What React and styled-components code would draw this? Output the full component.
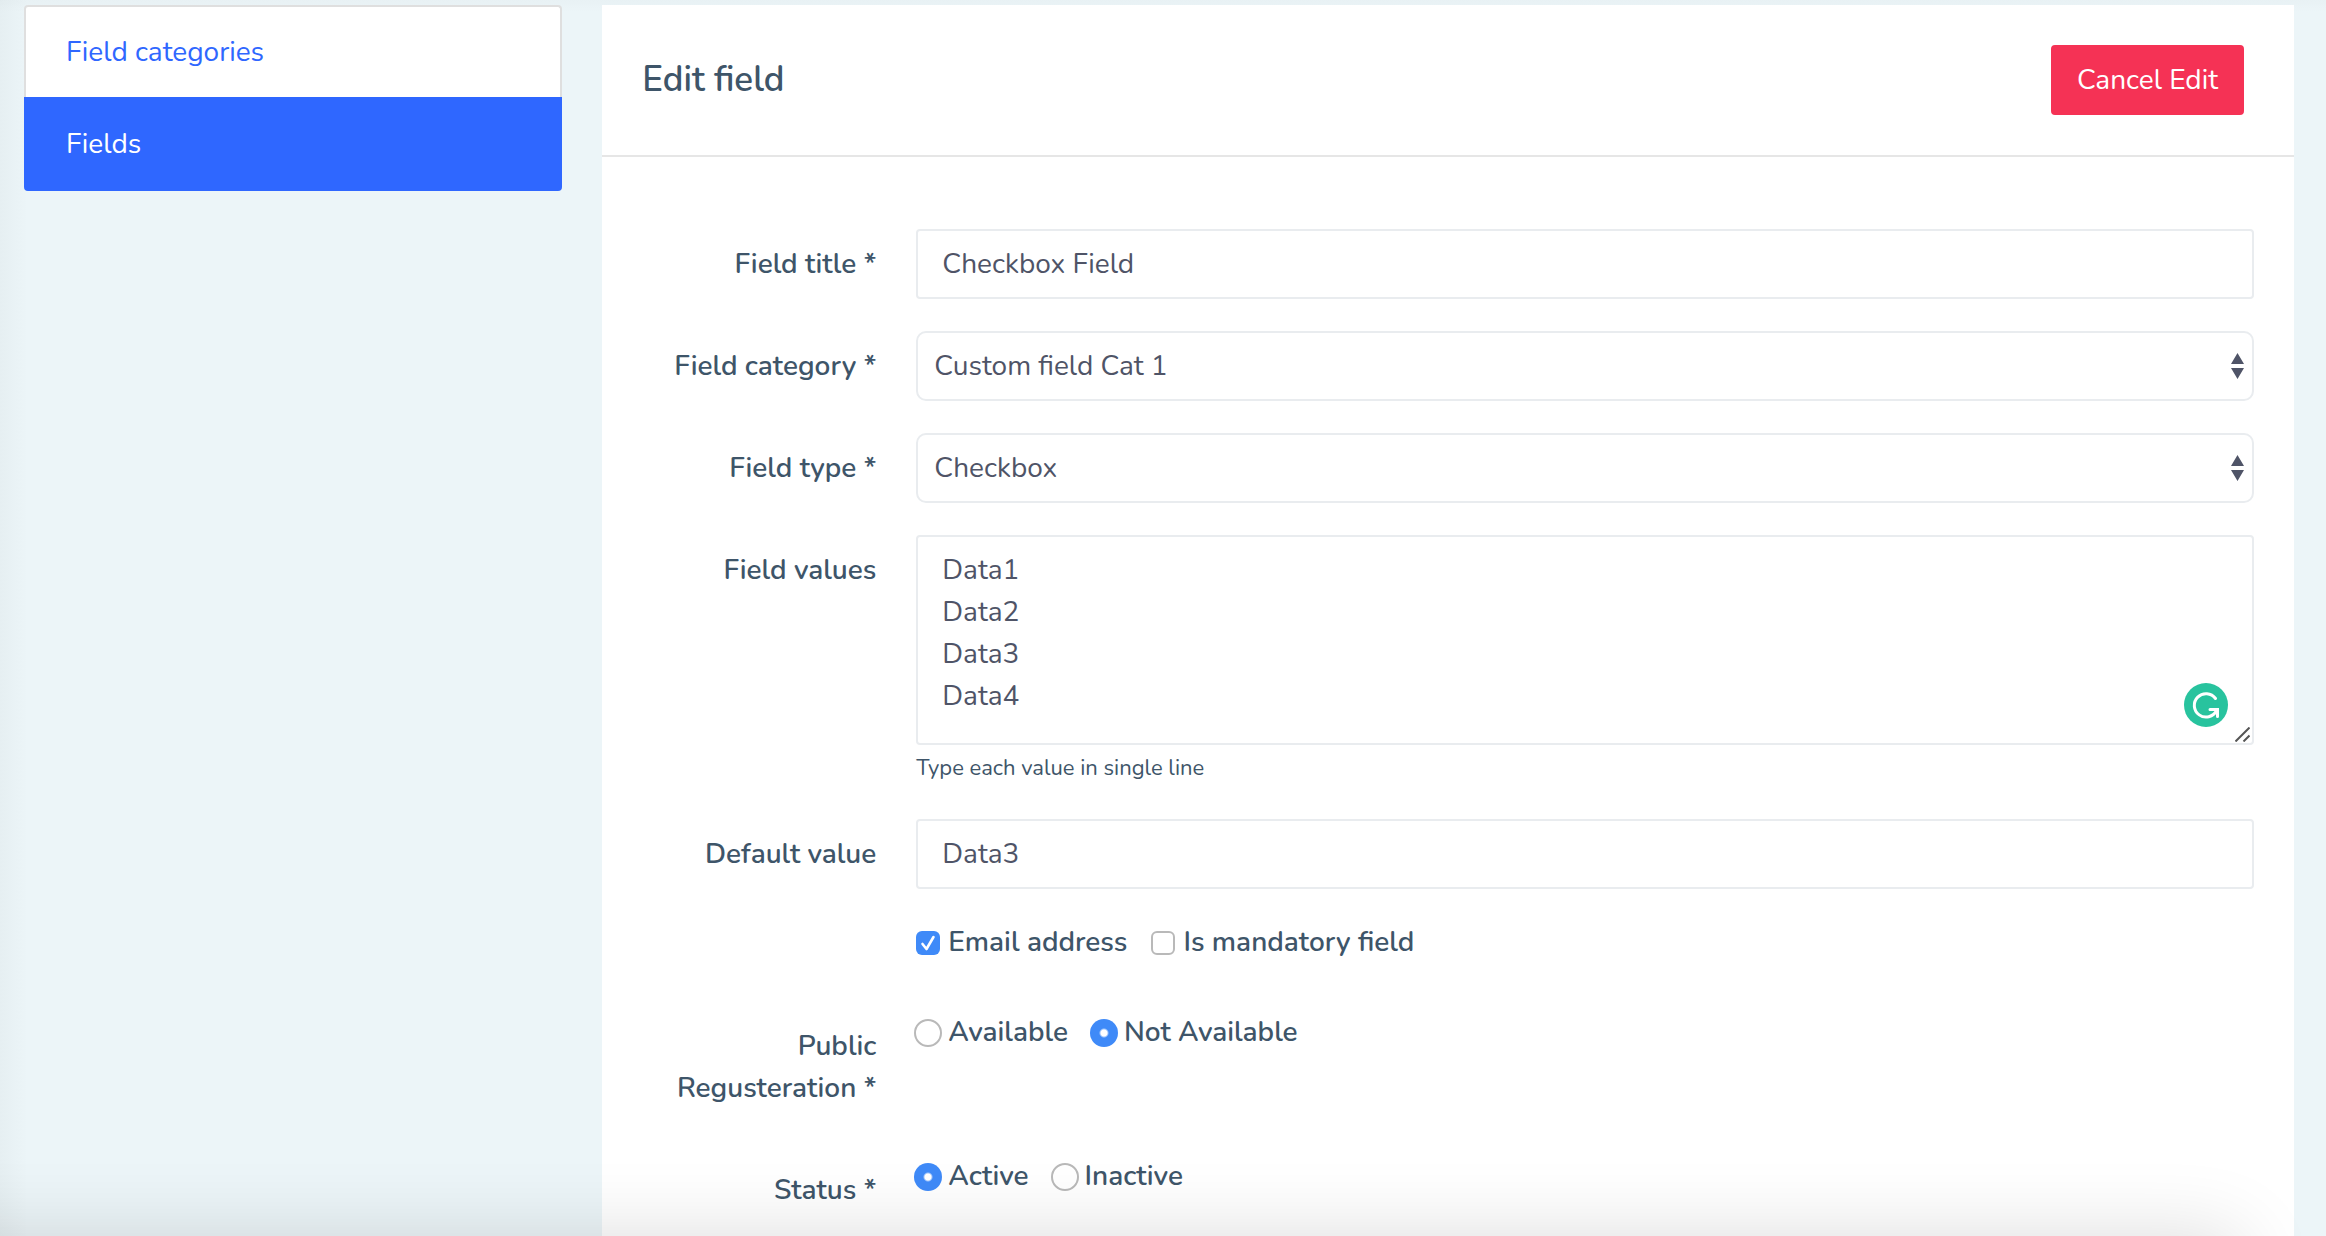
import styled, { createGlobalStyle } from 'styled-components';

const GlobalStyle = createGlobalStyle`
  * {
    box-sizing: border-box;
  }
  body {
    margin: 0;
    font-family: 'Nunito', 'Lato', sans-serif;
    font-size: 28px;
    line-height: 42px;
    color: #3e5569;
    background-color: #ecf5f8;
  }
`;

const Page = styled.div`
  position: relative;
  display: grid;
  grid-template-columns: minmax(0, 7fr) minmax(0, 22fr);
  gap: 40px;
  min-height: 100vh;
  padding: 5px 32px 0 24px;
  overflow: hidden;
  background-image:
    linear-gradient(to bottom, rgba(40, 50, 50, 0.02), transparent 12px),
    linear-gradient(to right, rgba(40, 50, 50, 0.03), transparent 28px);
`;

const BottomShade = styled.div`
  position: absolute;
  left: -100px;
  right: 86px;
  bottom: -100px;
  height: 100px;
  pointer-events: none;
  box-shadow: 0 0 80px rgba(0, 0, 0, 0.14);
`;

const Menu = styled.nav`
  align-self: start;
  display: flex;
  flex-direction: column;
`;

const MenuLink = styled.a`
  padding: 24px 40px;
  border: 2px solid ${(props) => (props.$active ? '#2f67ff' : '#dfdfdf')};
  border-radius: ${(props) => (props.$active ? '0 0 4px 4px' : '4px 4px 0 0')};
  border-bottom-width: ${(props) => (props.$active ? '2px' : '0')};
  background-color: ${(props) => (props.$active ? '#2f67ff' : '#fff')};
  color: ${(props) => (props.$active ? '#fff' : '#2f67ff')};
  text-decoration: none;
`;

const Card = styled.main`
  background-color: #fff;
`;

const CardHeader = styled.header`
  display: flex;
  align-items: center;
  justify-content: space-between;
  padding: 40px 50px 40px 40px;
  border-bottom: 2px solid #e6e6e6;
`;

const Title = styled.h4`
  margin: 0;
  font-size: 35px;
  font-weight: 600;
`;

const CancelButton = styled.button`
  padding: 12px 24px;
  border: 2px solid #f53255;
  border-radius: 4px;
  background-color: #f53255;
  color: #fff;
  font: inherit;
`;

const Form = styled.form`
  display: flex;
  flex-direction: column;
  gap: 32px;
  padding: 72px 40px 0;
`;

const Row = styled.div`
  display: grid;
  grid-template-columns: minmax(0, 7fr) minmax(0, 40fr);
  column-gap: 40px;
`;

const Label = styled.label`
  padding: 14px 0;
  font-weight: 600;
  text-align: right;
`;

const Control = styled.div`
  position: relative;
  display: flex;
  flex-direction: column;
  grid-column: 2;
`;

const Input = styled.input`
  width: 100%;
  height: 70px;
  padding: 12px 24px;
  border: 2px solid #e9ecef;
  border-radius: 4px;
  background-color: #fff;
  color: #4f5467;
  font: inherit;
`;

const Select = styled.select`
  width: 100%;
  height: 70px;
  padding: 12px 16px;
  border: 2px solid #e9ecef;
  border-radius: 10px;
  background-color: #fff;
  color: #4f5467;
  font: inherit;
  appearance: none;
`;

const SelectArrows = styled.svg`
  position: absolute;
  top: 22px;
  right: 10px;
  width: 13px;
  height: 26px;
  pointer-events: none;
`;

const TextBox = styled.div`
  position: relative;
  display: flex;
`;

const TextArea = styled.textarea`
  width: 100%;
  height: 210px;
  padding: 12px 24px;
  border: 2px solid #e9ecef;
  border-radius: 4px;
  background-color: #fff;
  color: #4f5467;
  font: inherit;
  resize: none;
`;

const Badge = styled.svg`
  position: absolute;
  right: 26px;
  bottom: 18px;
  width: 44px;
  height: 44px;
`;

const Grip = styled.svg`
  position: absolute;
  right: 4px;
  bottom: 3px;
  width: 15px;
  height: 15px;
`;

const Help = styled.small`
  margin-top: 4px;
  font-size: 22px;
  line-height: 38px;
`;

const Options = styled.div`
  display: flex;
  grid-column: 2;
  align-self: start;
  gap: 24px;
  padding-bottom: ${(props) => (props.$spaced ? '16px' : '0')};
`;

const Option = styled.label`
  display: flex;
  align-items: center;
  gap: 8px;
  font-weight: 600;
`;

const Box = styled.input`
  flex: none;
  width: 24px;
  height: 24px;
  margin: 2px 0 0;
  border: 2px solid #b9b9b9;
  border-radius: 6px;
  background: #fff;
  appearance: none;

  &:checked {
    border: 0;
    background: #3f8af8
      url("data:image/svg+xml,%3Csvg xmlns='http://www.w3.org/2000/svg' viewBox='0 0 24 24'%3E%3Cpath d='M6.5 13l4 5L17.5 6' fill='none' stroke='white' stroke-width='2.6' stroke-linecap='round' stroke-linejoin='round'/%3E%3C/svg%3E");
  }
`;

const Radio = styled.input`
  flex: none;
  width: 28px;
  height: 28px;
  margin: 2px -2px 0;
  border: 2px solid #b9b9b9;
  border-radius: 50%;
  background: #fff;
  appearance: none;

  &:checked {
    border: 0;
    background: radial-gradient(circle, #fff 3px, #3f8af8 5px);
  }
`;

const Arrows = () => (
  <SelectArrows viewBox="0 0 13 26" aria-hidden="true">
    <path d="M6.5 0L13 11H0zM6.5 26L13 15H0z" fill="#4f5467" />
  </SelectArrows>
);

const TextRow = ({ id, label, value }) => (
  <Row>
    <Label htmlFor={id}>{label}</Label>
    <Control>
      <Input id={id} type="text" defaultValue={value} />
    </Control>
  </Row>
);

const SelectRow = ({ id, label, value }) => (
  <Row>
    <Label htmlFor={id}>{label}</Label>
    <Control>
      <Select id={id} defaultValue={value}>
        <option>{value}</option>
      </Select>
      <Arrows />
    </Control>
  </Row>
);

const RadioRow = ({ name, label, options, selected }) => (
  <Row role="radiogroup" aria-labelledby={name}>
    <Label as="span" id={name}>
      {label}
    </Label>
    <Options>
      {options.map((option) => (
        <Option key={option}>
          <Radio type="radio" name={name} defaultChecked={option === selected} />
          {option}
        </Option>
      ))}
    </Options>
  </Row>
);

const App = () => (
  <>
    <GlobalStyle />
    <Page>
      <Menu>
        <MenuLink href="#categories">Field categories</MenuLink>
        <MenuLink href="#fields" $active>
          Fields
        </MenuLink>
      </Menu>
      <Card>
        <CardHeader>
          <Title>Edit field</Title>
          <CancelButton type="button">Cancel Edit</CancelButton>
        </CardHeader>
        <Form>
          <TextRow id="title" label="Field title *" value="Checkbox Field" />
          <SelectRow id="category" label="Field category *" value="Custom field Cat 1" />
          <SelectRow id="type" label="Field type *" value="Checkbox" />
          <Row>
            <Label htmlFor="values">Field values</Label>
            <Control>
              <TextBox>
                <TextArea id="values" defaultValue={'Data1\nData2\nData3\nData4'} />
                <Badge viewBox="0 0 44 44" aria-hidden="true">
                  <circle cx="22" cy="22" r="22" fill="#28c39e" />
                  <path
                    d="M31.5 15.5A11.7 11.7 0 1 0 32.5 27.5M26 26.5h7.5v7"
                    fill="none"
                    stroke="#fff"
                    strokeWidth="3"
                    strokeLinecap="round"
                  />
                </Badge>
                <Grip viewBox="0 0 15 15" aria-hidden="true">
                  <path d="M0.5 14.5l14-14M8.5 14.5l6-6" stroke="#555" strokeWidth="2" />
                </Grip>
              </TextBox>
              <Help>Type each value in single line</Help>
            </Control>
          </Row>
          <TextRow id="default" label="Default value" value="Data3" />
          <Row>
            <Options $spaced>
              <Option>
                <Box type="checkbox" defaultChecked />
                Email address
              </Option>
              <Option>
                <Box type="checkbox" />
                Is mandatory field
              </Option>
            </Options>
          </Row>
          <RadioRow
            name="registration"
            label="Public Regusteration *"
            options={['Available', 'Not Available']}
            selected="Not Available"
          />
          <RadioRow
            name="status"
            label="Status *"
            options={['Active', 'Inactive']}
            selected="Active"
          />
        </Form>
      </Card>
      <BottomShade />
    </Page>
  </>
);

export default App;
